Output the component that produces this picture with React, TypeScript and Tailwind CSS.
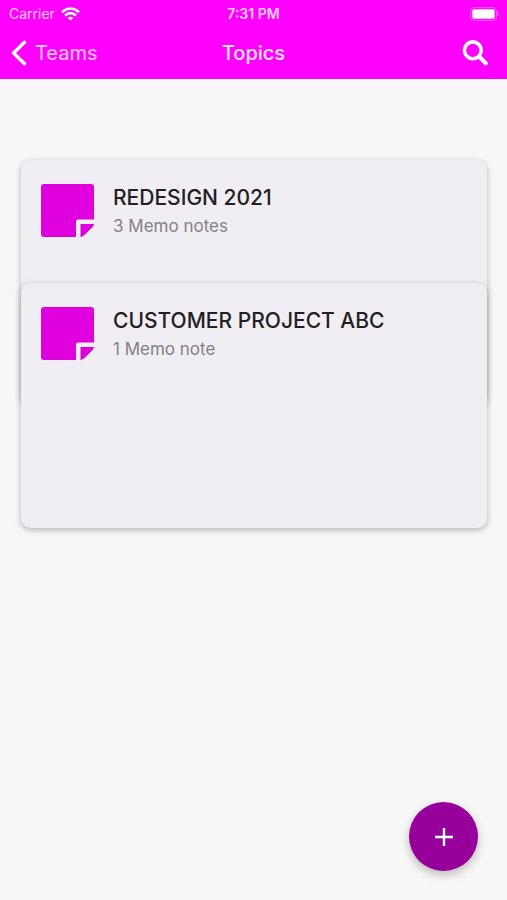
import React from 'react';

type Topic = { id: number; title: string; notes: string };

const topics: Topic[] = [
  { id: 1, title: 'REDESIGN 2021', notes: '3 Memo notes' },
  { id: 2, title: 'CUSTOMER PROJECT ABC', notes: '1 Memo note' },
];

const NoteIcon = () => (
  <svg viewBox="0 0 53 53" className="w-[53px] h-[53px] shrink-0" fill="#e000dd" aria-hidden="true">
    <path d="M3 0H50Q53 0 53 3V35.500H37Q35 35.500 35 37.500V53H3Q0 53 0 50V3Q0 0 3 0Z" />
    <path d="M39.500 40H53Q52.500 42 51 43.500L43.500 51Q42 52.500 39.500 53Z" />
  </svg>
);

const StatusBar = () => (
  <div className="grid grid-cols-3 items-center h-7 px-2 text-white">
    <div className="flex items-center gap-1.5 pl-px text-sm text-white/80">
      <span>Carrier</span>
      <svg viewBox="0 0 19 14" className="w-[19px] h-3.5" fill="none" stroke="white" strokeWidth="2.6" aria-hidden="true">
        <path d="M1 5.2Q9.500 -2.200 18 5.200" />
        <path d="M4 8.500Q9.500 3.700 15 8.500" />
        <path d="M9.500 13.600L6.600 10.700Q9.500 8.700 12.400 10.700Z" fill="white" stroke="none" />
      </svg>
    </div>
    <div className="text-center text-sm font-semibold text-white/80">7:31 PM</div>
    <svg viewBox="0 0 30 14" className="w-[30px] h-3.5 justify-self-end" aria-hidden="true">
      <rect x="1.600" y="0.600" width="25.800" height="12.800" rx="3.500" fill="none" stroke="white" strokeOpacity="0.35" />
      <rect x="3.300" y="2.300" width="22.400" height="9.400" rx="1.800" fill="white" />
      <path d="M28.500 4.800Q30 5.500 30 7T28.500 9.200Z" fill="white" fillOpacity="0.4" />
    </svg>
  </div>
);

const NavBar = () => (
  <nav className="grid grid-cols-3 items-center px-[11px] pb-[2px] h-[51px] text-white">
    <button type="button" className="flex items-center gap-2 text-xl text-white/80">
      <svg viewBox="0 0 16 26" className="w-4 h-[26px]" fill="none" stroke="white" strokeWidth="3.4" strokeLinecap="round" strokeLinejoin="round" aria-hidden="true">
        <path d="M13.500 2.200L2.500 13L13.500 23.800" />
      </svg>
      Teams
    </button>
    <h1 className="text-center text-xl font-medium text-white/90">Topics</h1>
    <button type="button" aria-label="Search" className="justify-self-end pr-2">
      <svg viewBox="0 0 26 26" className="w-[26px] h-[26px]" fill="none" stroke="white" aria-hidden="true">
        <circle cx="10.800" cy="10.300" r="8.400" strokeWidth="3.600" />
        <path d="M17 16.500L23.700 23.300" strokeWidth="4.200" strokeLinecap="round" />
      </svg>
    </button>
  </nav>
);

// cards are stacked, each one overlaps the lower half of the one before
const TopicCard = ({ topic }: { topic: Topic }) => (
  <li className="h-[245px] rounded-[10px] bg-[#f0eef2] shadow-[0_2px_6px_rgba(0,0,0,0.28)] not-first:-mt-[122px]">
    <a href={`#topic-${topic.id}`} className="flex gap-[19px] px-5 pt-6">
      <NoteIcon />
      <div>
        <h2 className="text-[21px] leading-7 font-medium text-[#222024]">{topic.title}</h2>
        <p className="text-[17px] leading-7 text-[#858088]">{topic.notes}</p>
      </div>
    </a>
  </li>
);

export default function App() {
  return (
    <div className="min-h-screen bg-[#f7f7f7] font-['Inter',sans-serif]">
      <header className="bg-[#ff00ff]">
        <StatusBar />
        <NavBar />
      </header>
      <main className="pl-[21px] pr-5 pt-[81px] pb-28">
        <ul>
          {topics.map((topic) => (
            <TopicCard key={topic.id} topic={topic} />
          ))}
        </ul>
      </main>
      <button
        type="button"
        aria-label="Add topic"
        className="fixed right-[29px] bottom-[29px] flex items-center justify-center w-[69px] h-[69px] rounded-full bg-[#97009b] shadow-[0_4px_10px_rgba(0,0,0,0.25)]"
      >
        <svg viewBox="0 0 18 18" className="w-[18px] h-[18px]" fill="none" stroke="white" strokeWidth="2.4" aria-hidden="true">
          <path d="M9 0V18M0 9H18" />
        </svg>
      </button>
    </div>
  );
}
